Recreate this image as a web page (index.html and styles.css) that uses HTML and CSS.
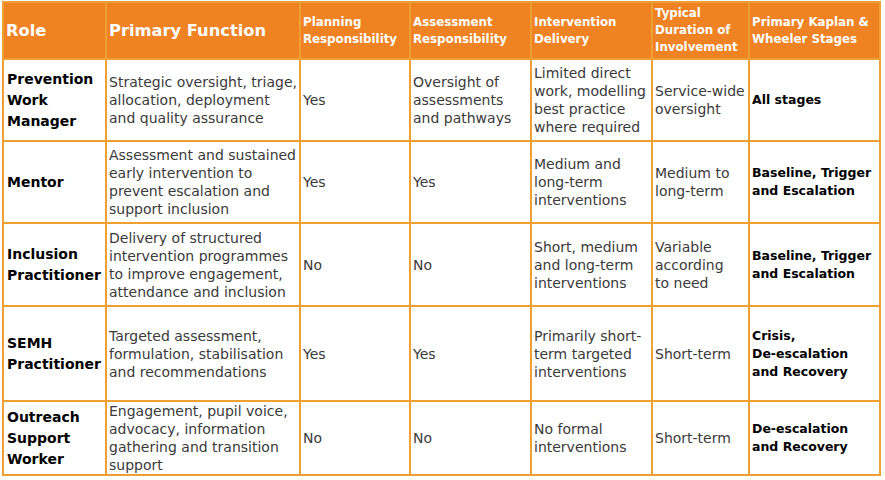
FILE: index.html
```html
<!DOCTYPE html>
<html>
<head>
<meta charset="utf-8">
<link rel="stylesheet" href="styles.css">
</head>
<body>
<table class="roles">
  <colgroup>
    <col class="c-role"><col class="c-func"><col class="c-plan"><col class="c-assess"><col class="c-deliv"><col class="c-dur"><col class="c-stage">
  </colgroup>
  <thead>
    <tr class="r-head">
      <th class="big">Role</th>
      <th class="big">Primary Function</th>
      <th>Planning Responsibility</th>
      <th>Assessment Responsibility</th>
      <th>Intervention Delivery</th>
      <th>Typical Duration of Involvement</th>
      <th>Primary Kaplan &amp; Wheeler Stages</th>
    </tr>
  </thead>
  <tbody>
    <tr class="r1">
      <td class="role">Prevention Work Manager</td>
      <td>Strategic oversight, triage, allocation, deployment<br>and quality assurance</td>
      <td>Yes</td>
      <td>Oversight of assessments<br>and pathways</td>
      <td>Limited direct work, modelling best practice where required</td>
      <td>Service-wide oversight</td>
      <td class="stage">All stages</td>
    </tr>
    <tr class="r2">
      <td class="role">Mentor</td>
      <td>Assessment and sustained early intervention to prevent escalation and support inclusion</td>
      <td>Yes</td>
      <td>Yes</td>
      <td>Medium and long-term interventions</td>
      <td>Medium to long-term</td>
      <td class="stage">Baseline, Trigger and Escalation</td>
    </tr>
    <tr class="r3">
      <td class="role">Inclusion Practitioner</td>
      <td>Delivery of structured intervention programmes to improve engagement, attendance and inclusion</td>
      <td>No</td>
      <td>No</td>
      <td>Short, medium and long-term interventions</td>
      <td>Variable<br>according<br>to need</td>
      <td class="stage">Baseline, Trigger and Escalation</td>
    </tr>
    <tr class="r4">
      <td class="role">SEMH Practitioner</td>
      <td>Targeted assessment, formulation, stabilisation and recommendations</td>
      <td>Yes</td>
      <td>Yes</td>
      <td>Primarily short-term targeted interventions</td>
      <td>Short-term</td>
      <td class="stage">Crisis,<br><span class="nw">De-escalation</span> and Recovery</td>
    </tr>
    <tr class="r5">
      <td class="role">Outreach Support Worker</td>
      <td>Engagement, pupil voice, advocacy, information gathering and transition support</td>
      <td>No</td>
      <td>No</td>
      <td>No formal interventions</td>
      <td>Short-term</td>
      <td class="stage"><span class="nw">De-escalation</span> and Recovery</td>
    </tr>
  </tbody>
</table>
</body>
</html>
```

FILE: styles.css
```css
html, body {
  margin: 0;
  padding: 0;
  background: #ffffff;
}

body {
  font-family: "DejaVu Sans", "Liberation Sans", sans-serif;
}

.roles {
  margin: 1px 0 0 2px;
  width: 879px;
  border-collapse: collapse;
  table-layout: fixed;
}

.c-role { width: 103px; }
.c-func { width: 194px; }
.c-plan { width: 110px; }
.c-assess { width: 121px; }
.c-deliv { width: 121px; }
.c-dur { width: 97px; }
.c-stage { width: 131px; }

.roles th,
.roles td {
  border: 2px solid #efa032;
  padding: 0 2px;
  vertical-align: middle;
  text-align: left;
}

.roles th {
  background: #ef8223;
  color: #ffffff;
  font-weight: bold;
  font-size: 11.8px;
  line-height: 17px;
}

.roles th.big {
  font-size: 16.3px;
  line-height: 20px;
}

.roles td {
  color: #3a3a3a;
  font-size: 14px;
  line-height: 18px;
}

.roles td.role {
  color: #000000;
  font-weight: bold;
  font-size: 14px;
  line-height: 21px;
  padding-left: 3px;
}

.roles td.stage {
  color: #000000;
  font-weight: bold;
  font-size: 12.5px;
  line-height: 18px;
}

.nw { white-space: nowrap; }

.r-head { height: 57px; }
.r1 { height: 82px; }
.r2 { height: 82px; }
.r3 { height: 83px; }
.r4 { height: 95px; }
.r5 { height: 73px; }
```
